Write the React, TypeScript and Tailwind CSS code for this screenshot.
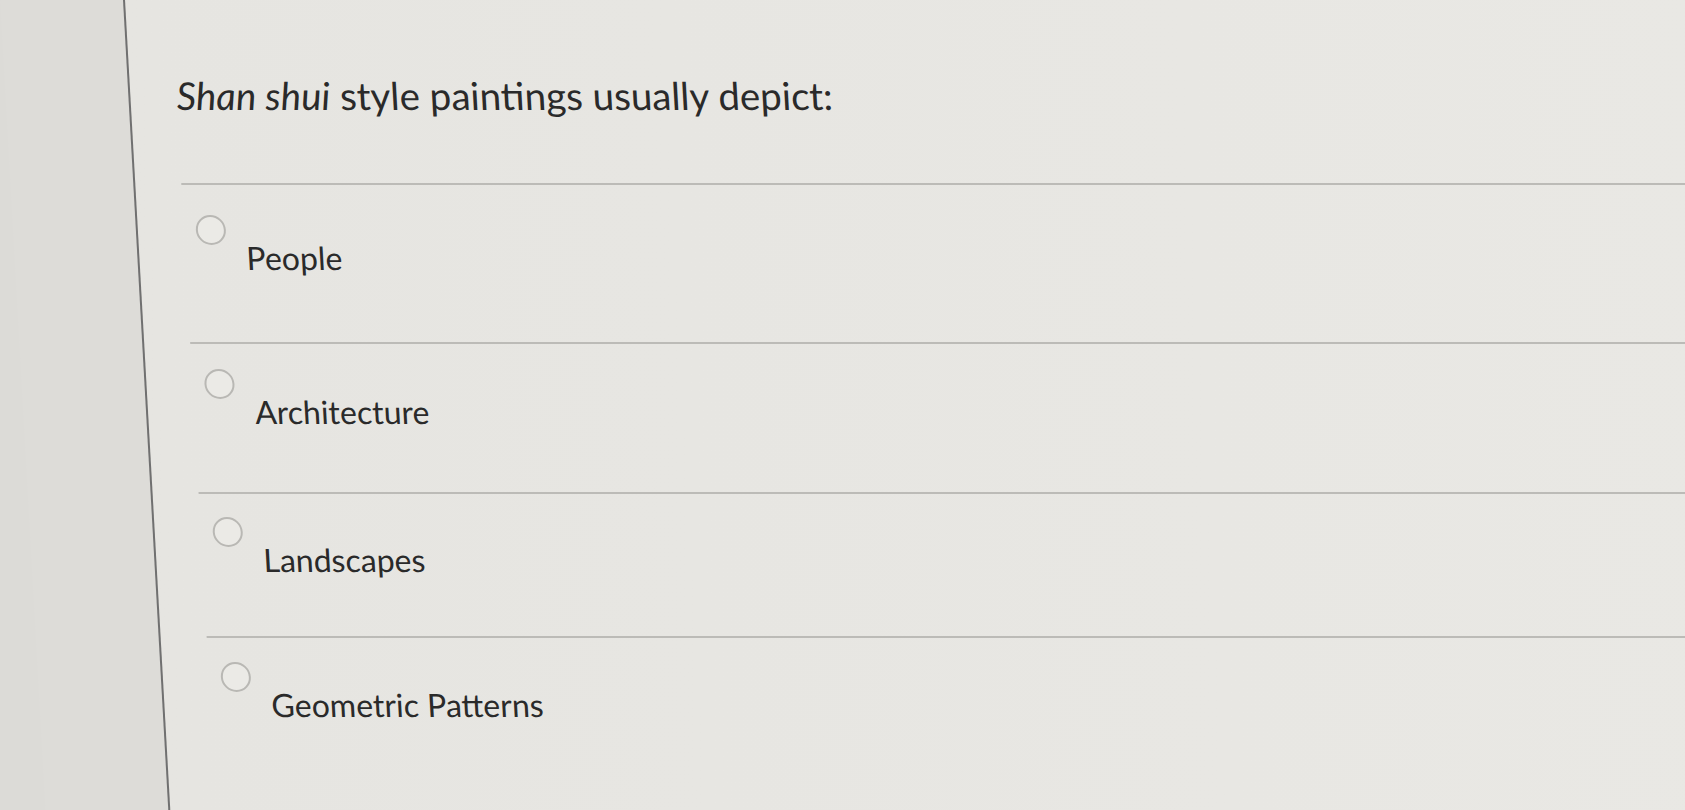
const options = [
  { label: 'People', rowClass: 'h-[159px] pt-[30px]' },
  { label: 'Architecture', rowClass: 'h-[150px] pt-[25px]' },
  { label: 'Landscapes', rowClass: 'h-[144px] pt-[23px]' },
  { label: 'Geometric Patterns', rowClass: 'flex-1 pt-[24px]' },
];

function Radio() {
  return <span className="block h-[30px] w-[30px] shrink-0 rounded-full border-2 border-[#b9b8b4] bg-[#ebeae6]" />;
}

export default function App() {
  return (
    <div className="h-[810px] w-full overflow-hidden bg-[#dcdbd7] font-['Lato','Open_Sans',sans-serif] text-[#2a2a2a]">
      {/* the photo leans a little; skew the sheet to match */}
      <div className="flex h-full origin-top-left skew-x-[3.2deg]">
        <div className="w-[123px] shrink-0 bg-[#dddcd8]" />
        <div className="flex flex-1 flex-col border-l-2 border-[#707070] bg-gradient-to-r from-[#e6e5e1] to-[#e9e8e4] pl-[46px]">
          <div className="h-[183px] shrink-0 pt-[72px]">
            <h1 className="text-[38.5px] leading-[46px]">
              <em>Shan shui</em> style paintings usually depict:
            </h1>
          </div>
          {options.map((o) => (
            <label
              key={o.label}
              className={`flex shrink-0 items-start border-t-2 border-[#bcbbb7] pl-[12px] ${o.rowClass}`}
            >
              <Radio />
              <span className="ml-[19px] mt-[24px] text-[32px] leading-[38px]">{o.label}</span>
            </label>
          ))}
        </div>
      </div>
    </div>
  );
}
